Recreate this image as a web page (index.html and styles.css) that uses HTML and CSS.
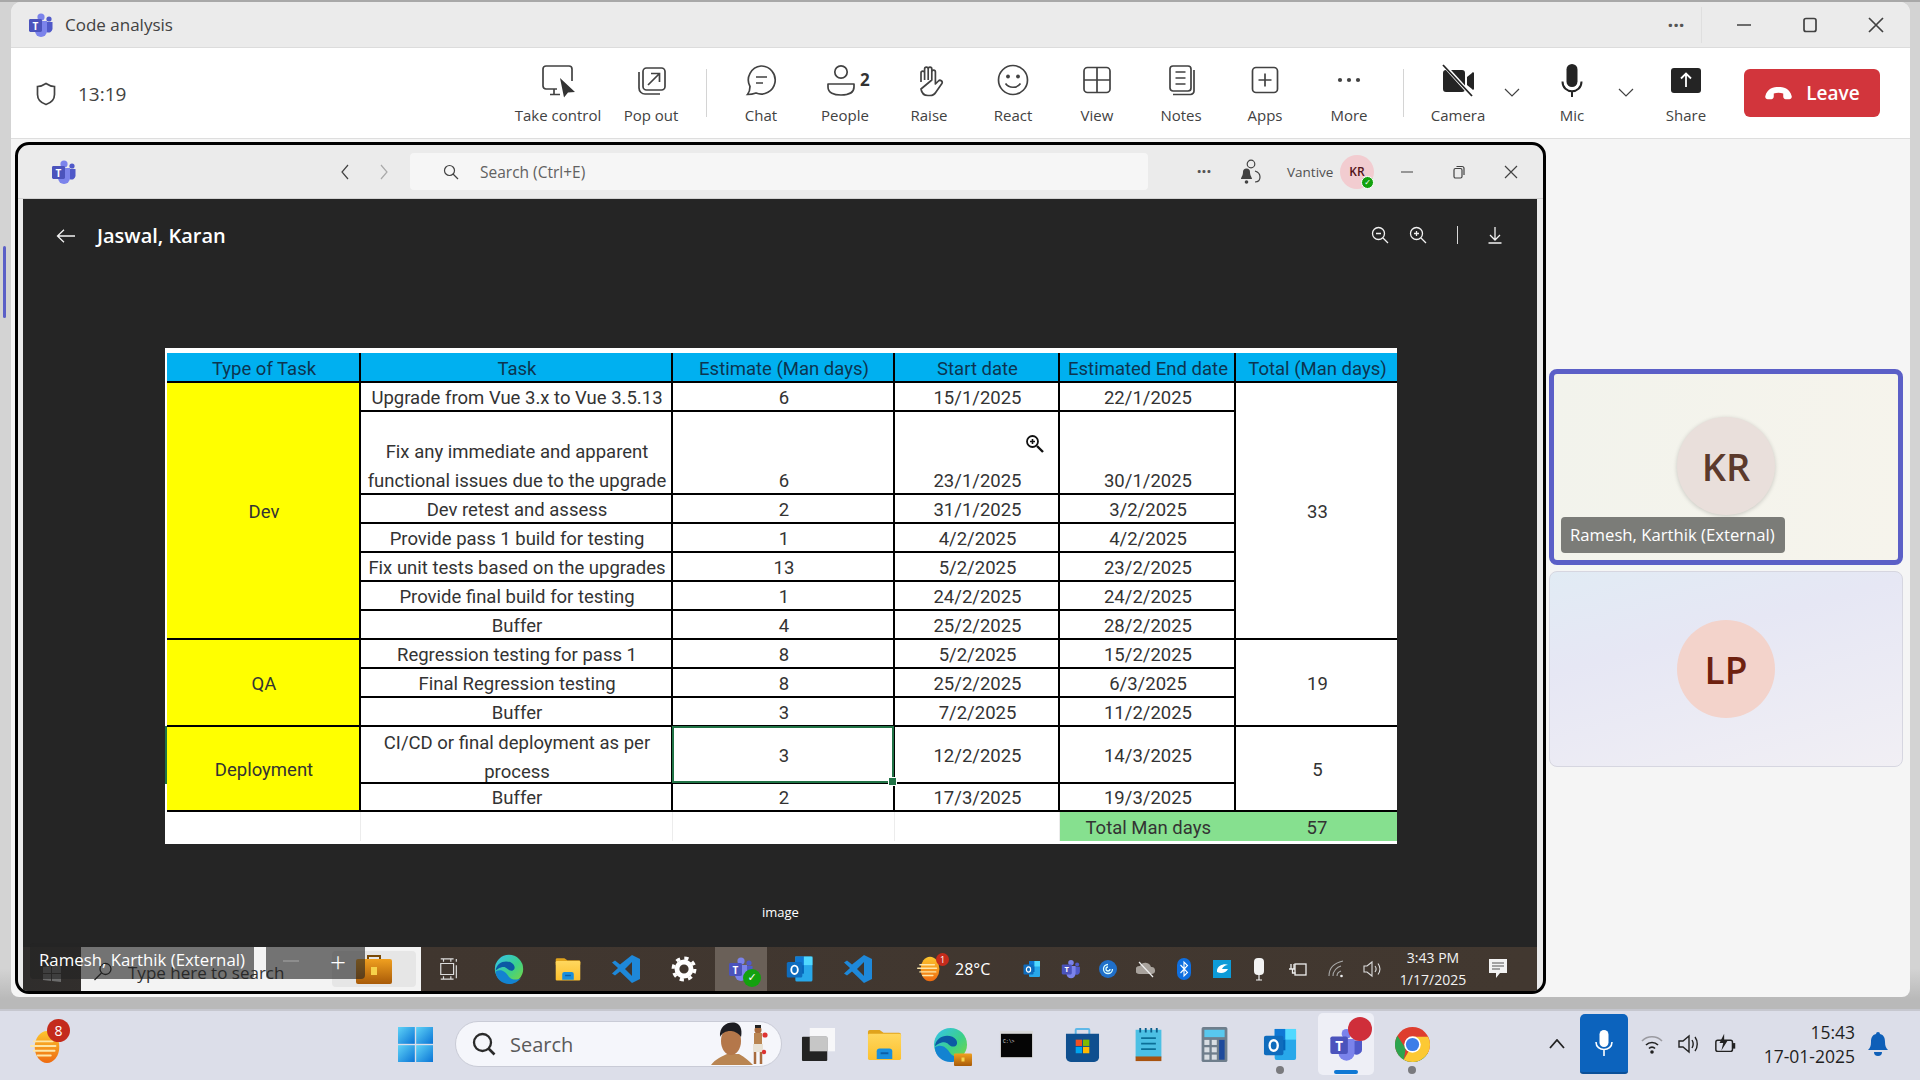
FILE: index.html
```html
<!DOCTYPE html>
<html lang="en">
<head>
<meta charset="utf-8">
<title>Code analysis</title>
<link rel="stylesheet" href="styles.css">
</head>
<body>
<svg class="defs" width="0" height="0" aria-hidden="true">
  <defs>
    <linearGradient id="winG" x1="0" y1="0" x2="1" y2="1"><stop offset="0" stop-color="#5fd3f7"/><stop offset="1" stop-color="#0a74d6"/></linearGradient>
    <linearGradient id="edgeG" x1="0" y1="0" x2="1" y2="1"><stop offset="0" stop-color="#35c1f1"/><stop offset=".55" stop-color="#3bd08a"/><stop offset="1" stop-color="#7fd63a"/></linearGradient>
    <linearGradient id="sunG" x1="0" y1="0" x2="0" y2="1"><stop offset="0" stop-color="#fdc62e"/><stop offset="1" stop-color="#ee6a10"/></linearGradient>
    <linearGradient id="folderG" x1="0" y1="0" x2="0" y2="1"><stop offset="0" stop-color="#ffd75e"/><stop offset="1" stop-color="#fcc02e"/></linearGradient>
    <linearGradient id="caseG" x1="0" y1="0" x2="0" y2="1"><stop offset="0" stop-color="#f0a020"/><stop offset="1" stop-color="#a85a08"/></linearGradient>
    <symbol id="teams" viewBox="0 0 26 24">
      <circle cx="13" cy="4" r="3.6" fill="#7b83eb"/>
      <circle cx="21" cy="6" r="2.6" fill="#5059c9"/>
      <path d="M17 9h7.5v7a4 4 0 0 1-6 3z" fill="#5059c9"/>
      <path d="M7 8h12v10a6 6 0 0 1-12 0z" fill="#7b83eb"/>
      <rect x="1" y="6" width="13" height="13" rx="1.4" fill="#4b53bc"/>
      <text x="7.5" y="16.5" class="logoT">T</text>
    </symbol>
    <symbol id="outlook" viewBox="0 0 36 36">
      <path d="M12 2h20a2 2 0 0 1 2 2v28a2 2 0 0 1-2 2H14a2 2 0 0 1-2-2z" fill="#28a8ea"/>
      <path d="M12 2h11v11H12z" fill="#0f78d4"/><path d="M23 2h11v11H23z" fill="#50d9ff"/><path d="M12 13h11v11H12z" fill="#0364b8"/>
      <rect x="1" y="9" width="20" height="20" rx="2" fill="#0f6cbd"/>
      <ellipse cx="11" cy="19" rx="4.2" ry="5.4" fill="none" stroke="#fff" stroke-width="2.4"/>
    </symbol>
    <symbol id="vscode" viewBox="0 0 30 30">
      <path d="M21 1l8 4v20l-8 4-12-11.500-5 4-3-2 6-5.500-6-5.500 3-2 5 4z" fill="#1e88d9"/>
      <path d="M21 8l-7 7 7 7z" fill="#3f3630"/>
    </symbol>
    <symbol id="edge" viewBox="0 0 36 36">
      <circle cx="18" cy="18" r="17" fill="url(#edgeG)"/>
      <path d="M2 20C3 10 13 7 20 10c6 3 6 9 2 10-6 1-6-6-13-4-4 1-7 4-7 4z" fill="#0c59a4"/>
      <path d="M2 21c0 9 8 15 16 15 6 0 11-3 14-7-5 3-12 2-15-3-3-5-9-9-15-5z" fill="#1383d1"/>
    </symbol>
    <symbol id="folder" viewBox="0 0 36 36">
      <path d="M1 5a2 2 0 0 1 2-2h10l4 3h16a2 2 0 0 1 2 2v4H1z" fill="#e0a31c"/>
      <rect x="1" y="7" width="34" height="27" rx="1.500" fill="url(#folderG)"/>
      <path d="M10 33V25a3 3 0 0 1 3-3h10a3 3 0 0 1 3 3v8z" fill="#1a8fdc"/><rect x="14" y="26" width="8" height="2" fill="#0b5ea6"/>
    </symbol>
    <symbol id="sun" viewBox="0 0 36 36">
      <ellipse cx="18" cy="18" rx="13" ry="17" fill="url(#sunG)"/>
      <path d="M4 12h20M1 17h26M4 22h22M8 27h14" stroke="#fde6a8" stroke-width="2" stroke-linecap="round"/>
    </symbol>
  </defs>
</svg>

<div class="screen">
  <div class="desk">
    <span class="side-pin"></span>
    <div class="window">
      <header class="titlebar">
        <svg class="t-logo"><use href="#teams"/></svg>
        <span class="t-name">Code analysis</span>
        <span class="t-spacer"></span>
        <span class="t-dots">···</span>
        <span class="t-sep"></span>
        <svg class="t-ctl" viewBox="0 0 16 16"><path d="M1 8h14" class="ln"/></svg>
        <svg class="t-ctl" viewBox="0 0 16 16"><rect x="2" y="1.500" width="12" height="13" rx="2" class="ln"/></svg>
        <svg class="t-ctl" viewBox="0 0 16 16"><path d="M1 1l14 14M15 1L1 15" class="ln"/></svg>
      </header>

      <nav class="toolbar">
        <div class="tb-left">
          <svg class="shield" viewBox="0 0 20 24"><path d="M10 1.500c3 2 5.500 3 8.500 3v8c0 5-4 8.500-8.500 10-4.500-1.500-8.500-5-8.500-10v-8c3 0 5.500-1 8.500-3z" class="ln"/></svg>
          <span class="clock">13:19</span>
        </div>
        <div class="tool w102">
          <svg class="ic" viewBox="0 0 36 36"><path d="M17 27H6a3 3 0 0 1-3-3V7a3 3 0 0 1 3-3h23a3 3 0 0 1 3 3v12" class="ln"/><path d="M14 27v5M10 32.500h10" class="ln"/><path d="M20 16l15 14-7 .5-4 5z" fill="#333"/></svg>
          <span>Take control</span>
        </div>
        <div class="tool">
          <svg class="ic" viewBox="0 0 36 36"><rect x="10" y="6" width="22" height="22" rx="3.500" class="ln"/><path d="M6 10v16a6 6 0 0 0 6 6h15" class="ln"/><path d="M15 23L26 12M18 11.500h8.500V20" class="ln"/></svg>
          <span>Pop out</span>
        </div>
        <span class="tb-div"></span>
        <div class="tool">
          <svg class="ic" viewBox="0 0 36 36"><path d="M18 4a14 14 0 1 1-5 27q-4 1.500-8.500 1.500q2.500-3 2.500-8A14 14 0 0 1 18 4z" class="ln"/><path d="M13 15h11M13 21h7" class="ln"/></svg>
          <span>Chat</span>
        </div>
        <div class="tool">
          <div class="people">
            <svg class="ic ic-p" viewBox="0 0 30 36"><circle cx="15" cy="10" r="6.200" class="ln"/><path d="M2 22h26v3c0 6-6 8-13 8S2 31 2 25z" class="ln" stroke-linejoin="round"/></svg>
            <b>2</b>
          </div>
          <span>People</span>
        </div>
        <div class="tool">
          <svg class="ic" viewBox="0 0 36 36"><path d="M10 20V11a1.800 1.800 0 0 1 3.600 0v7M13.600 18V7a1.800 1.800 0 0 1 3.600 0v11M17.200 18V7a1.800 1.800 0 0 1 3.600 0v11M20.800 18V10a1.800 1.800 0 0 1 3.600 0v12l3-3a2.200 2.200 0 0 1 3.500 2.600L25 30q-2 3.500-6 3.500h-2q-6 0-7-6.500z" class="ln" stroke-linejoin="round"/></svg>
          <span>Raise</span>
        </div>
        <div class="tool">
          <svg class="ic" viewBox="0 0 36 36"><circle cx="18" cy="18" r="14.500" class="ln"/><circle cx="13" cy="14.500" r="1.900" fill="#424242"/><circle cx="23" cy="14.500" r="1.900" fill="#424242"/><path d="M10.500 21.500c3.500 5 11.500 5 15 0" class="ln"/></svg>
          <span>React</span>
        </div>
        <div class="tool">
          <svg class="ic" viewBox="0 0 36 36"><rect x="5" y="5.500" width="26" height="25" rx="3.500" class="ln"/><path d="M18 5.500v25M5 18h26" class="ln"/></svg>
          <span>View</span>
        </div>
        <div class="tool">
          <svg class="ic" viewBox="0 0 36 36"><rect x="7" y="4" width="21" height="25" rx="3" class="ln"/><path d="M12.500 10h10M12.500 16h10M12.500 22h10" class="ln"/><path d="M31 8v21a3.500 3.500 0 0 1-3.500 3.500H10" class="ln"/></svg>
          <span>Notes</span>
        </div>
        <div class="tool">
          <svg class="ic" viewBox="0 0 36 36"><rect x="5.500" y="5.500" width="25" height="25" rx="3.500" class="ln"/><path d="M18 11.500v13M11.500 18h13" class="ln"/></svg>
          <span>Apps</span>
        </div>
        <div class="tool">
          <svg class="ic" viewBox="0 0 36 36"><circle cx="9" cy="18" r="2.100" fill="#424242"/><circle cx="18" cy="18" r="2.100" fill="#424242"/><circle cx="27" cy="18" r="2.100" fill="#424242"/></svg>
          <span>More</span>
        </div>
        <span class="tb-div tb-div2"></span>
        <div class="tool">
          <svg class="ic" viewBox="0 0 36 36"><path d="M6 8h16a3 3 0 0 1 3 3v16a3 3 0 0 1-3 3H6a3 3 0 0 1-3-3V11a3 3 0 0 1 3-3zM27 15l5-4a1 1 0 0 1 2 .500v15a1 1 0 0 1-2 .500l-5-4z" fill="#242424"/><path d="M3 2l29 32" stroke="#fff" stroke-width="4"/><path d="M3 3l29 31" stroke="#242424" stroke-width="1.800"/></svg>
          <span>Camera</span>
        </div>
        <svg class="chev" viewBox="0 0 16 10"><path d="M1 1l7 7 7-7" class="ln thin"/></svg>
        <div class="tool mic-tool">
          <svg class="ic" viewBox="0 0 36 36"><rect x="12.500" y="2" width="11" height="23" rx="5.500" fill="#242424"/><path d="M8.500 19.500c0 13 19 13 19 0M18 29v6" class="ln dark"/></svg>
          <span>Mic</span>
        </div>
        <svg class="chev" viewBox="0 0 16 10"><path d="M1 1l7 7 7-7" class="ln thin"/></svg>
        <div class="tool mic-tool">
          <svg class="ic" viewBox="0 0 36 36"><rect x="3" y="6" width="30" height="25" rx="3" fill="#242424"/><path d="M18 25V12M13 16.500l5-5 5 5" fill="none" stroke="#fff" stroke-width="1.800"/></svg>
          <span>Share</span>
        </div>
        <button class="leave">
          <svg viewBox="0 0 30 18"><path d="M1 12C3 3 10 2 15 2s12 1 14 10c.3 2-1 3-2.500 3h-4c-1.500 0-2.500-1-2.500-3V9c-3-1.200-7-1.200-10 0v3c0 2-1 3-2.500 3h-4C2 15 .7 14 1 12z" fill="#fff"/></svg>
          <span>Leave</span>
        </button>
      </nav>

      <main class="stage">
        <section class="shared">
          <div class="s-title">
            <svg class="s-logo"><use href="#teams"/></svg>
            <svg class="s-nav s-back" viewBox="0 0 10 16"><path d="M8 1L2 8l6 7" class="ln thin"/></svg>
            <svg class="s-nav s-fwd" viewBox="0 0 10 16"><path d="M2 1l6 7-6 7" class="ln thin pale"/></svg>
            <div class="s-search">
              <svg viewBox="0 0 16 16"><circle cx="6.500" cy="6.500" r="5" class="ln thin"/><path d="M10 10l5 5" class="ln thin"/></svg>
              <span>Search (Ctrl+E)</span>
            </div>
            <span class="s-dots">···</span>
            <svg class="s-bell" viewBox="0 0 22 26"><circle cx="12" cy="5" r="3.800" class="ln thin"/><path d="M16 12c3 1 5 3 5 6s-2 5-5 5" class="ln thin"/><path d="M4 13a3.500 3.500 0 0 1 7 0c0 4 2 5 2 7H2c0-2 2-3 2-7z" fill="#424242"/><circle cx="7.500" cy="23" r="1.800" fill="#424242"/></svg>
            <span class="s-org">Vantive</span>
            <span class="s-avatar">KR<i class="s-status">✓</i></span>
            <svg class="s-ctl s-ctl1" viewBox="0 0 14 14"><path d="M1 7h12" class="ln thin"/></svg>
            <svg class="s-ctl" viewBox="0 0 14 14"><rect x="2" y="3.500" width="8" height="9.500" rx="1.500" class="ln thin"/><path d="M4.500 1.500H10a2 2 0 0 1 2 2V10" class="ln thin"/></svg>
            <svg class="s-ctl" viewBox="0 0 14 14"><path d="M1 1l12 12M13 1L1 13" class="ln thin"/></svg>
          </div>

          <div class="viewer">
            <div class="v-head">
              <svg class="v-back" viewBox="0 0 20 14"><path d="M19 7H1.500M8 .8L1.500 7 8 13.200" class="lw"/></svg>
              <span class="v-name">Jaswal, Karan</span>
              <span class="t-spacer"></span>
              <svg class="v-ic" viewBox="0 0 18 18"><circle cx="7.500" cy="7.500" r="6" class="lw"/><path d="M12 12l5 5M5 7.500h5" class="lw"/></svg>
              <svg class="v-ic" viewBox="0 0 18 18"><circle cx="7.500" cy="7.500" r="6" class="lw"/><path d="M12 12l5 5M5 7.500h5M7.500 5v5" class="lw"/></svg>
              <span class="v-sep"></span>
              <svg class="v-ic" viewBox="0 0 18 18"><path d="M9 1v12.500M4 9l5 5 5-5M2.500 17h13" class="lw"/></svg>
            </div>

            <div class="sheet">
              <table class="grid">
                <colgroup><col class="c1"><col class="c2"><col class="c3"><col class="c4"><col class="c5"><col class="c6"></colgroup>
                <tr class="head"><th>Type of Task</th><th>Task</th><th>Estimate (Man days)</th><th>Start date</th><th>Estimated End date</th><th>Total (Man days)</th></tr>
                <tr><td rowspan="7" class="type">Dev</td><td>Upgrade from Vue 3.x to Vue 3.5.13</td><td>6</td><td>15/1/2025</td><td>22/1/2025</td><td rowspan="7" class="sum">33</td></tr>
                <tr class="tall"><td><div class="two">Fix any immediate and apparent<br>functional issues due to the upgrade</div></td><td>6</td><td class="cursor-cell">23/1/2025<svg class="zoom-cursor" viewBox="0 0 20 20"><circle cx="7.500" cy="7.500" r="5.500" fill="#fff" stroke="#111" stroke-width="1.800"/><path d="M5 7.500h5M7.500 5v5" stroke="#111" stroke-width="1.600"/><path d="M12 12l6 6" stroke="#111" stroke-width="2.400"/></svg></td><td>30/1/2025</td></tr>
                <tr><td>Dev retest and assess</td><td>2</td><td>31/1/2025</td><td>3/2/2025</td></tr>
                <tr><td>Provide pass 1 build for testing</td><td>1</td><td>4/2/2025</td><td>4/2/2025</td></tr>
                <tr><td>Fix unit tests based on the upgrades</td><td>13</td><td>5/2/2025</td><td>23/2/2025</td></tr>
                <tr><td>Provide final build for testing</td><td>1</td><td>24/2/2025</td><td>24/2/2025</td></tr>
                <tr><td>Buffer</td><td>4</td><td>25/2/2025</td><td>28/2/2025</td></tr>
                <tr><td rowspan="3" class="type">QA</td><td>Regression testing for pass 1</td><td>8</td><td>5/2/2025</td><td>15/2/2025</td><td rowspan="3" class="sum">19</td></tr>
                <tr><td>Final Regression testing</td><td>8</td><td>25/2/2025</td><td>6/3/2025</td></tr>
                <tr><td>Buffer</td><td>3</td><td>7/2/2025</td><td>11/2/2025</td></tr>
                <tr class="wrap"><td rowspan="2" class="type deploy">Deployment</td><td><div class="two">CI/CD or final deployment as per<br>process</div></td><td class="selected">3</td><td class="mid">12/2/2025</td><td class="mid">14/3/2025</td><td rowspan="2" class="sum">5</td></tr>
                <tr class="short"><td>Buffer</td><td>2</td><td>17/3/2025</td><td>19/3/2025</td></tr>
                <tr class="foot"><td></td><td></td><td></td><td></td><td class="total">Total Man days</td><td class="total">57</td></tr>
              </table>
            </div>

            <div class="v-caption">image</div>

            <div class="mini-bar">
              <div class="mini-start"><svg viewBox="0 0 20 20"><path d="M1 3l8-1v7H1zM10 2l9-1v8h-9zM1 10h8v7l-8-1zM10 10h9v8l-9-1z" fill="#6b6b6b"/></svg></div>
              <div class="mini-search">
                <svg viewBox="0 0 20 20"><circle cx="12.500" cy="7" r="5.500" fill="none" stroke="#222" stroke-width="1.300"/><path d="M8.500 11l-7 7" stroke="#222" stroke-width="1.300"/></svg>
                <span>Type here to search</span>
                <div class="mini-case"><svg viewBox="0 0 36 30"><path d="M12 5V2h12v3" fill="none" stroke="#7a4a08" stroke-width="2"/><rect y="5" width="36" height="25" rx="2" fill="url(#caseG)"/><rect x="15" y="13" width="6" height="8" fill="#f6d24a"/></svg></div>
              </div>
              <div class="mc"><svg class="m20" viewBox="0 0 20 24"><path d="M1 1h14M1 23h14M4 1v3M12 1v3M4 20v3M12 20v3M1 6h14v12H1zM18 1v3M18 8v14" fill="none" stroke="#ddd" stroke-width="1.300"/></svg></div>
              <div class="mc"><svg class="m30"><use href="#edge"/></svg></div>
              <div class="mc"><svg class="m26"><use href="#folder"/></svg></div>
              <div class="mc"><svg class="m30"><use href="#vscode"/></svg></div>
              <div class="mc"><svg class="m26" viewBox="0 0 24 24"><circle cx="12" cy="12" r="6.500" fill="none" stroke="#fff" stroke-width="4.500"/><circle cx="12" cy="12" r="10" fill="none" stroke="#fff" stroke-width="3" stroke-dasharray="3.900 3.950"/></svg></div>
              <div class="mc mc-on"><svg class="m26"><use href="#teams"/></svg><i class="mc-check">✓</i></div>
              <div class="mc"><svg class="m28"><use href="#outlook"/></svg></div>
              <div class="mc"><svg class="m30"><use href="#vscode"/></svg></div>
              <div class="mc mc-sunny"><span class="sunwrap"><svg class="m26"><use href="#sun"/></svg><i class="sunbadge">1</i></span></div>
              <div class="mc mc-temp">28°C</div>
              <div class="mc"><svg class="m18"><use href="#outlook"/></svg></div>
              <div class="mc"><svg class="m20"><use href="#teams"/></svg></div>
              <div class="mc"><svg class="m18" viewBox="0 0 18 18"><circle cx="9" cy="9" r="9" fill="#1f6fc9"/><path d="M13.500 9A4.500 4.500 0 1 1 9 4.500M11 9a2 2 0 1 1-2-2" fill="none" stroke="#dff" stroke-width="1.300"/></svg></div>
              <div class="mc"><svg class="m20" viewBox="0 0 20 18"><path d="M3 14a4 4 0 0 1 1-8 6 6 0 0 1 11 1 3.500 3.500 0 0 1 1 7z" fill="#a8a29c"/><path d="M3 2l14 15" stroke="#eee" stroke-width="1.200"/></svg></div>
              <div class="mc"><svg class="m-bt" viewBox="0 0 14 22"><rect width="14" height="22" rx="7" fill="#0f6fe0"/><path d="M3.500 7l7 7.500L7 18V4l3.500 3.500-7 7.500" fill="none" stroke="#fff" stroke-width="1.100"/></svg></div>
              <div class="mc"><svg class="m18" viewBox="0 0 18 18"><rect width="18" height="18" fill="#0d9bd8"/><path d="M4 10c1-5 8-7 11-5-3 0-5 2-6 4h6c-2 4-7 5-11 3z" fill="#fff"/></svg></div>
              <div class="mc"><svg class="m-mic" viewBox="0 0 12 24"><rect x="1" y="1" width="10" height="17" rx="4" fill="#f3f3f3"/><path d="M6 18v5M3 23h6" stroke="#f3f3f3" stroke-width="1.200"/></svg></div>
              <div class="mc"><svg class="m20" viewBox="0 0 20 18"><rect x="8" y="4" width="11" height="11" fill="none" stroke="#eee" stroke-width="1.300"/><path d="M2 9h6M4 4v5M7 4v5M5.500 9v4h3" fill="none" stroke="#eee" stroke-width="1.300"/></svg></div>
              <div class="mc"><svg class="m20" viewBox="0 0 20 20"><path d="M2 17c0-8 5-13 14-15M6 17c0-5 4-9 8-10M10 17c0-3 1-4 4-5" fill="none" stroke="#aaa" stroke-width="1.100"/><circle cx="14.500" cy="17" r="1.300" fill="#eee"/></svg></div>
              <div class="mc"><svg class="m20" viewBox="0 0 20 20"><path d="M1 7v6h3l5 4V3L4 7z" fill="none" stroke="#ddd" stroke-width="1.100"/><path d="M12 7c1.500 2 1.500 4 0 6M15 4.500c2.500 3.500 2.500 7.500 0 11" fill="none" stroke="#ddd" stroke-width="1.100"/></svg></div>
              <div class="mc mc-time"><span>3:43 PM</span><span>1/17/2025</span></div>
              <div class="mc"><svg class="m22" viewBox="0 0 20 22"><path d="M1 1h18v14h-7l-4 5v-5H1z" fill="#f3f3f3"/><path d="M4 5h12M4 8h12M4 11h8" stroke="#555" stroke-width="1.200"/></svg></div>
              <div class="mc"></div>
            </div>

            <div class="mini-tip">Ramesh, Karthik (External)</div>
            <div class="mini-ctrl"><span class="minus"></span><span class="plus">+</span></div>
          </div>
        </section>

        <aside class="rail">
          <div class="tile tile-a">
            <span class="avatar av-kr">KR</span>
            <span class="tile-name">Ramesh, Karthik (External)</span>
          </div>
          <div class="tile tile-b">
            <span class="avatar av-lp">LP</span>
          </div>
        </aside>
      </main>
    </div>
  </div>

  <footer class="taskbar">
    <div class="tk-weather"><svg class="w-sun"><use href="#sun"/></svg><i class="w-badge">8</i></div>
    <div class="tk-start">
      <svg viewBox="0 0 36 36"><rect width="17.300" height="17.300" fill="url(#winG)"/><rect x="18.700" width="17.300" height="17.300" fill="url(#winG)"/><rect y="18.700" width="17.300" height="17.300" fill="url(#winG)"/><rect x="18.700" y="18.700" width="17.300" height="17.300" fill="url(#winG)"/></svg>
    </div>
    <div class="tk-search">
      <svg class="tk-lens" viewBox="0 0 24 24"><circle cx="10.500" cy="10.500" r="8.500" fill="none" stroke="#2a2a2a" stroke-width="2.300"/><path d="M16.500 16.500l6 6" stroke="#2a2a2a" stroke-width="2.600"/></svg>
      <span>Search</span>
      <svg class="tk-doodle" viewBox="0 0 60 44"><path d="M0 44c4-6 12-9 16-11l12 0c6 3 10 7 14 11z" fill="#b98552"/><ellipse cx="20" cy="20" rx="10" ry="14" fill="#b4774a"/><path d="M9 16C8 4 18 0 25 2c6 2 6 10 5 14-3-5-8-6-11-6-4 0-8 2-10 6z" fill="#1d1d22"/><circle cx="47" cy="9" r="3.500" fill="#a86b3e"/><path d="M44 4h6v3h-6z" fill="#222"/><rect x="43" y="12" width="8" height="12" fill="#b98552"/><rect x="42" y="23" width="10" height="8" fill="#e8e2d6"/><path d="M44 31v12M50 31v12" stroke="#a86b3e" stroke-width="2.500"/><circle cx="54" cy="14" r="2.600" fill="#d33"/><circle cx="53" cy="31" r="2.200" fill="#d33"/></svg>
    </div>
    <div class="tk-cell"><svg class="tk-ic" viewBox="0 0 36 36"><rect x="9" y="1" width="26" height="24" fill="#f7f7f9"/><rect x="1" y="10" width="26" height="25" rx="1" fill="#232323"/><rect x="9" y="10" width="18" height="15" fill="#c6c6c6"/></svg></div>
    <div class="tk-cell"><svg class="tk-ic"><use href="#folder"/></svg></div>
    <div class="tk-cell">
      <span class="edgewrap"><svg class="tk-ic"><use href="#edge"/></svg><svg class="edgecase" viewBox="0 0 36 30"><rect y="5" width="36" height="25" rx="2" fill="url(#caseG)"/><rect x="15" y="13" width="6" height="8" fill="#f6d24a"/></svg></span>
    </div>
    <div class="tk-cell"><svg class="tk-ic" viewBox="0 0 36 30"><rect x="1" y="1" width="34" height="28" fill="#d8d8d8"/><rect x="2" y="4" width="32" height="24" fill="#050505"/><text x="4" y="13" class="cmdT">C:\></text></svg></div>
    <div class="tk-cell"><svg class="tk-ic" viewBox="0 0 36 36"><path d="M11 8V3a1 1 0 0 1 1-1h12a1 1 0 0 1 1 1v5" fill="none" stroke="#5fb8e8" stroke-width="2"/><path d="M1 7h34v24a5 5 0 0 1-5 5H6a5 5 0 0 1-5-5z" fill="#0f4f8f"/><rect x="11" y="13" width="6.500" height="6.500" fill="#f25022"/><rect x="18.500" y="13" width="6.500" height="6.500" fill="#7fba00"/><rect x="11" y="20.500" width="6.500" height="6.500" fill="#00a4ef"/><rect x="18.500" y="20.500" width="6.500" height="6.500" fill="#ffb900"/></svg></div>
    <div class="tk-cell"><svg class="tk-ic" viewBox="0 0 30 38"><rect x="1" y="3" width="28" height="30" fill="#4cc0e4"/><rect x="1" y="32" width="28" height="5" fill="#a8530f"/><path d="M6 1v5M12 1v5M18 1v5M24 1v5" stroke="#0b5c8a" stroke-width="2"/><path d="M7 12h16M7 18h16M7 24h16" stroke="#0b6f97" stroke-width="2"/></svg></div>
    <div class="tk-cell"><svg class="tk-ic" viewBox="0 0 28 38"><rect width="28" height="38" rx="2" fill="#6f7e8c"/><rect x="3" y="3" width="22" height="8" fill="#58c8ee"/><g fill="#d9dee3"><rect x="3" y="14" width="5.500" height="5.500"/><rect x="11" y="14" width="5.500" height="5.500"/><rect x="3" y="22" width="5.500" height="5.500"/><rect x="11" y="22" width="5.500" height="5.500"/><rect x="3" y="30" width="5.500" height="5.500"/><rect x="11" y="30" width="5.500" height="5.500"/></g><rect x="19" y="14" width="6" height="21.500" fill="#1e4a9c"/></svg></div>
    <div class="tk-cell dot"><svg class="tk-ic"><use href="#outlook"/></svg></div>
    <div class="tk-cell tk-active">
      <svg class="tk-ic"><use href="#teams"/></svg>
      <i class="red-dot"></i><i class="run-bar"></i>
    </div>
    <div class="tk-cell dot"><svg class="tk-ic" viewBox="0 0 36 36"><circle cx="18" cy="18" r="18" fill="#de3d2e"/><path d="M18 18L33.600 27A18 18 0 0 1 9 33.600z" fill="#2da44e"/><path d="M18 18L9 33.600A18 18 0 0 0 18 36 18 18 0 0 0 36 18a18 18 0 0 0-2-8H18z" fill="#fcc934"/><path d="M9 33.600A18 18 0 0 1 2.400 9L11 22z" fill="#2da44e"/><circle cx="18" cy="18" r="8.500" fill="#fff"/><circle cx="18" cy="18" r="6.800" fill="#3b7de8"/></svg></div>
    <span class="t-spacer"></span>
    <svg class="tk-up" viewBox="0 0 16 10"><path d="M1 9l7-8 7 8" fill="none" stroke="#222" stroke-width="1.800"/></svg>
    <div class="tk-mic"><svg viewBox="0 0 20 28"><rect x="5.500" y="1" width="9" height="17" rx="4.500" fill="#fff"/><path d="M2 13c0 10 16 10 16 0M10 21v6" fill="none" stroke="#fff" stroke-width="1.600"/></svg></div>
    <svg class="tk-tray" viewBox="0 0 24 24"><path d="M2 9a14 14 0 0 1 20 0" fill="none" stroke="#9a9aa0" stroke-width="1.600"/><path d="M6 13a8.500 8.500 0 0 1 12 0M9 16.500a4 4 0 0 1 6 0" fill="none" stroke="#222" stroke-width="1.700"/><circle cx="12" cy="20" r="1.800" fill="#222"/></svg>
    <svg class="tk-tray" viewBox="0 0 24 24"><path d="M2 9v6h4l6 5V4L6 9z" fill="none" stroke="#222" stroke-width="1.400"/><path d="M15 8c1.500 2.500 1.500 5.500 0 8M18 5c3 4 3 10 0 14" fill="none" stroke="#222" stroke-width="1.400"/></svg>
    <svg class="tk-tray" viewBox="0 0 26 24"><rect x="2" y="8" width="18" height="12" rx="2" fill="none" stroke="#222" stroke-width="1.600"/><rect x="20.500" y="11" width="2.500" height="6" fill="#222"/><path d="M11 1l-5 10h4l-2 8 7-11h-4z" fill="#222"/></svg>
    <div class="tk-clock"><span>15:43</span><span>17-01-2025</span></div>
    <svg class="tk-bell" viewBox="0 0 20 26"><path d="M10 1a2 2 0 0 1 2 2c4 1 5 4 5 8 0 4 1 6 3 8H0c2-2 3-4 3-8 0-4 1-7 5-8a2 2 0 0 1 2-2z" fill="#0e5fb8"/><path d="M6 21h8a4 4 0 0 1-8 0z" fill="#0e5fb8"/></svg>
  </footer>
</div>
</body>
</html>
```

FILE: styles.css
```css
* { box-sizing: border-box; }
html, body { margin: 0; height: 100%; }
body { font-family: "Open Sans", "Noto Sans", sans-serif; color: #424242; background: #d3d3d3; overflow: hidden; }
.defs { display: block; height: 0; }
.logoT { font: 700 10px "Open Sans", sans-serif; fill: #fff; text-anchor: middle; }
.cmdT { font: 5px "Liberation Mono", monospace; fill: #ddd; }
.ln { fill: none; stroke: #424242; stroke-width: 1.700; }
.ln.thin { stroke-width: 1.200; }
.ln.pale { stroke: #a9a9a9; }
.ln.dark { stroke: #242424; stroke-width: 2; }
.lw { fill: none; stroke: #f2f2f2; stroke-width: 1.300; }
.t-spacer { flex: 1; }

.screen { width: 1920px; height: 1080px; display: flex; flex-direction: column; }
.desk { position: relative; height: 1009px; padding: 0 10px 12px 11px; border-top: 2px solid #a8a8a8; background: linear-gradient(#d3d3d3 96%, #b9b9b9 99%); }
.side-pin { position: absolute; left: 3px; top: 244px; width: 3px; height: 72px; background: #5b5fc7; border-radius: 2px; }
.window { height: 995px; display: flex; flex-direction: column; background: #f5f5f5; border-radius: 10px 10px 8px 8px; overflow: hidden; }

.titlebar { height: 46px; flex: none; display: flex; align-items: center; background: #ebebeb; border-bottom: 1px solid #dcdcdc; padding-left: 17px; }
.t-logo { width: 26px; height: 24px; margin-right: 11px; }
.t-name { font-size: 17px; color: #424242; }
.t-dots { width: 24px; text-align: center; font-size: 20px; font-weight: 700; color: #555; line-height: 1; margin-right: 13px; }
.t-sep { width: 1px; height: 36px; background: #dfdfdf; margin-right: 34px; }
.t-ctl { width: 16px; height: 16px; margin-right: 50px; }
.t-ctl:last-child { margin-right: 26px; }

.toolbar { height: 91px; flex: none; display: flex; align-items: flex-start; background: #fff; border-bottom: 1px solid #dedede; padding-top: 14px; }
.tb-left { width: 496px; height: 64px; display: flex; align-items: center; padding-left: 25px; }
.shield { width: 20px; height: 24px; margin-right: 22px; }
.clock { font-size: 19px; color: #424242; }
.tool { width: 84px; flex: none; display: flex; flex-direction: column; align-items: center; font-size: 15px; line-height: 20px; color: #424242; }
.tool.w102 { width: 102px; }
.tool span { margin-top: 7px; white-space: nowrap; }
.ic { width: 36px; height: 36px; display: block; }
.people { display: flex; align-items: center; height: 36px; }
.ic-p { width: 30px; margin-left: 8px; }
.people b { font-size: 17px; color: #333; margin: 0 0 0 4px; width: 12px; }
.tb-div { width: 1px; height: 48px; margin: 7px 12px 0 13px; background: #d4d4d4; flex: none; }
.tb-div2 { margin-left: 12px; }
.chev { width: 16px; height: 10px; margin: 26px 4px 0 4px; flex: none; }
.mic-tool { margin-left: 6px; }
.mic-tool + .chev { margin-left: 4px; }
.leave { width: 136px; height: 48px; margin: 7px 0 0 16px; border: 0; border-radius: 6px; background: #d2353c; color: #fff; display: flex; align-items: center; justify-content: center; gap: 13px; font: 600 19px "Open Sans", sans-serif; flex: none; }
.leave svg { width: 29px; height: 17px; }

.stage { flex: 1; display: flex; padding: 3px 0 0 4px; min-height: 0; }
.shared { width: 1531px; height: 852px; flex: none; border: 3px solid #000; border-radius: 14px; background: #ebebeb; display: flex; flex-direction: column; overflow: hidden; }
.s-title { height: 54px; flex: none; display: flex; align-items: center; border-bottom: 1px solid #d2d2d2; padding-left: 33px; }
.s-logo { width: 26px; height: 24px; flex: none; }
.s-nav { width: 10px; height: 16px; flex: none; }
.s-back { margin-left: 263px; }
.s-fwd { margin-left: 29px; }
.s-search { width: 738px; height: 37px; margin-left: 21px; background: #f6f6f6; border-radius: 4px; display: flex; align-items: center; padding-left: 33px; font-size: 15.500px; color: #616161; flex: none; }
.s-search svg { width: 16px; height: 16px; margin-right: 21px; }
.s-dots { width: 24px; margin-left: 44px; text-align: center; font-weight: 700; font-size: 17px; color: #555; }
.s-bell { width: 22px; height: 26px; margin-left: 23px; }
.s-org { font-size: 13.500px; color: #505050; margin-left: 26px; width: 52px; }
.s-avatar { position: relative; width: 34px; height: 34px; margin-left: 1px; border-radius: 50%; background: #f2ccd0; color: #521218; font-size: 12px; font-weight: 600; display: flex; align-items: center; justify-content: center; }
.s-status { position: absolute; right: 0; bottom: 0; width: 13px; height: 13px; border-radius: 50%; background: #13a10e; border: 1px solid #fff; color: #fff; font: 700 8px/11px "DejaVu Sans", sans-serif; text-align: center; }
.s-ctl { width: 14px; height: 14px; margin-left: 38px; }
.s-ctl1 { margin-left: 26px; }

.viewer { position: relative; height: 792px; flex: none; margin: 0 6px 0 5px; background: #252525; display: flex; flex-direction: column; }
.v-head { height: 75px; flex: none; display: flex; align-items: center; padding: 0 33px 0 33px; }
.v-back { width: 20px; height: 14px; margin: 0 21px 2px 0; }
.v-name { font-size: 20px; font-weight: 600; color: #fff; margin-bottom: 2px; }
.v-ic { width: 18px; height: 18px; margin: 0 0 4px 20px; }
.v-sep { width: 1px; height: 18px; background: #d8d8d8; margin: 0 8px 4px 30px; }

.sheet { width: 1232px; height: 496px; margin: 74px 0 0 142px; padding: 5px 0 0 2px; background: #fff; flex: none; }
.grid { width: 1230px; table-layout: fixed; border-collapse: collapse; font: 18.500px/24px Roboto, "Liberation Sans", sans-serif; color: #333; text-align: center; }
.c1 { width: 193px; } .c2 { width: 312px; } .c3 { width: 222px; } .c4 { width: 165px; } .c5 { width: 176px; } .c6 { width: 162px; }
.grid th, .grid td { height: 29px; padding: 2px 0 0 2px; border: 2px solid #000; font-weight: 400; vertical-align: bottom; white-space: nowrap; }
.grid th { background: #00b0f0; color: #0c3550; vertical-align: bottom; }
.grid tr > :first-child { border-left: 0; }
.grid tr > :last-child { border-right: 0; }
.head th { border-top: 0; }
.grid .type { background: #ff0; vertical-align: middle; }
.grid .sum, .grid .mid { vertical-align: middle; }
.tall td { height: 83px; }
.two { line-height: 29px; margin-bottom: -3px; }
.wrap td { height: 57px; }
.wrap .two { margin-bottom: -5px; }
.wrap .selected { vertical-align: middle; }
.short td { height: 28px; }
.foot td { height: 30px; border: 1px solid #ececec; border-top: 2px solid #000; border-bottom: 0; }
.grid .total { background: #86e08f; border: 0; border-top: 2px solid #000; vertical-align: middle; }
.selected { position: relative; }
.selected::before { content: ""; position: absolute; left: -1px; right: -1px; top: -1px; bottom: -1px; border: 2px solid #217346; }
.selected::after { content: ""; position: absolute; right: -4px; bottom: -4px; width: 7px; height: 7px; background: #217346; border: 1px solid #fff; }
.deploy { position: relative; }
.deploy::before { content: ""; position: absolute; left: -2px; top: -1px; width: 2px; height: 58px; background: #217346; }
.cursor-cell { position: relative; }
.zoom-cursor { position: absolute; right: 13px; top: 22px; width: 20px; height: 20px; }

.v-caption { margin-top: 59px; padding-left: 739px; font-size: 13px; color: #fff; line-height: 18px; flex: none; }
.mini-bar { position: absolute; left: 0; right: 0; bottom: 0; height: 44px; display: grid; grid-template-columns: 58px 340px 56px 64px 54px 62px 54px 60px 58px 58px 68px 55px 44px 34px 40px 36px 40px 36px 38px 38px 42px 30px 90px 40px 19px; align-items: center; background: linear-gradient(90deg, #2f2d2c 0, #40362f 25%, #423830 100%); }
.mini-start { height: 44px; display: flex; align-items: center; justify-content: center; padding-top: 10px; }
.mini-start svg { width: 20px; height: 20px; }
.mini-search { height: 44px; background: #f3f3f3; display: flex; align-items: center; font-size: 17px; color: #333; padding-left: 12px; padding-top: 6px; }
.mini-search > svg { width: 20px; height: 20px; margin-right: 15px; flex: none; }
.mini-search span { width: 200px; white-space: nowrap; flex: none; }
.mini-case { width: 84px; height: 36px; margin-left: 4px; background: #e6e6e6; border-radius: 4px; display: flex; align-items: center; justify-content: center; flex: none; margin-top: -6px; }
.mini-case svg { width: 36px; height: 30px; }
.mc { display: flex; align-items: center; justify-content: center; height: 44px; position: relative; }
.mc-on { background: #6a6058; margin: 0 4px; }
.mc-check { position: absolute; right: 6px; bottom: 4px; width: 18px; height: 18px; border-radius: 50%; background: #13a10e; color: #fff; font: 700 11px/18px "DejaVu Sans", sans-serif; text-align: center; }
.mc-sunny { padding-left: 18px; }
.m18 { width: 18px; height: 20px; } .m20 { width: 20px; height: 22px; } .m22 { width: 20px; height: 24px; }
.m26 { width: 26px; height: 26px; } .m28 { width: 28px; height: 28px; } .m30 { width: 30px; height: 30px; }
.m-bt { width: 14px; height: 24px; } .m-mic { width: 12px; height: 26px; }
.sunwrap { position: relative; display: block; height: 26px; }
.sunbadge { position: absolute; right: -6px; top: -3px; width: 13px; height: 13px; border-radius: 50%; background: #c42b1c; color: #fff; font: 9px/13px "Open Sans", sans-serif; text-align: center; }
.mc-temp { font-size: 16px; color: #fff; justify-content: flex-start; }
.mc-time { flex-direction: column; font-size: 14px; color: #f3f3f3; line-height: 22px; }
.mini-tip { position: absolute; left: 7px; top: 744px; width: 224px; height: 36px; border-radius: 4px; background: rgba(35,35,35,.62); color: #fff; font-size: 16.800px; line-height: 34px; padding-left: 9px; white-space: nowrap; }
.mini-ctrl { position: absolute; left: 243px; top: 744px; width: 99px; height: 36px; border-radius: 4px; background: rgba(35,35,35,.62); display: flex; align-items: center; }
.minus { width: 16px; height: 2px; background: #8d8d8d; margin-left: 17px; }
.plus { color: #fff; font-size: 28px; line-height: 30px; margin-left: 31px; font-weight: 300; }

.rail { width: 354px; flex: none; margin-left: 3px; padding-top: 227px; display: flex; flex-direction: column; gap: 6px; }
.tile { height: 196px; border-radius: 8px; display: flex; align-items: center; justify-content: center; position: relative; }
.tile-a { border: 5px solid #5b5fc7; background: linear-gradient(100deg, #f2f3ec, #f6f4ec); }
.tile-b { border: 1px solid #d6d6e0; background: linear-gradient(165deg, #e1ebf4 0, #e6e7f4 35%, #f1eff4 100%); }
.avatar { width: 98px; height: 98px; border-radius: 50%; display: flex; align-items: center; justify-content: center; font-size: 38px; font-weight: 600; }
.av-kr { background: #e9dfdb; color: #5c3a2c; box-shadow: 0 1px 4px rgba(0,0,0,.18); margin-bottom: 3px; }
.av-lp { background: #f3d3cb; color: #6e2110; font-size: 37px; }
.tile-name { position: absolute; left: 7px; bottom: 7px; width: 224px; height: 36px; border-radius: 4px; background: #7b7c78; color: #fff; font-size: 16.700px; line-height: 36px; padding-left: 9px; white-space: nowrap; }

.taskbar { height: 71px; flex: none; display: flex; align-items: center; background: #dcdee9; border-top: 2px solid #c6c7cf; padding-bottom: 3px; }
.tk-weather { position: relative; width: 382px; height: 44px; padding-left: 30px; }
.w-sun { width: 34px; height: 34px; margin-top: 8px; display: block; }
.w-badge { position: absolute; left: 47px; top: -3px; width: 23px; height: 23px; border-radius: 50%; background: #c42b1c; color: #fff; font: 14px/23px "Open Sans", sans-serif; text-align: center; }
.tk-start { width: 66px; display: flex; justify-content: center; }
.tk-start svg { width: 35px; height: 35px; }
.tk-search { width: 327px; height: 46px; margin: 0 3px 0 7px; border-radius: 23px; background: #f5f6fb; border: 1px solid #c9cbd6; display: flex; align-items: center; padding-left: 16px; font-size: 20px; color: #5a5a5a; position: relative; }
.tk-lens { width: 24px; height: 24px; margin-right: 14px; }
.tk-doodle { position: absolute; right: 10px; bottom: 1px; width: 60px; height: 44px; }
.tk-cell { width: 66px; height: 62px; position: relative; display: flex; align-items: center; justify-content: center; flex: none; }
.tk-ic { width: 35px; height: 35px; display: block; }
.edgewrap { position: relative; display: block; height: 35px; }
.edgecase { position: absolute; right: -4px; bottom: -4px; width: 18px; height: 15px; }
.tk-active { background: #eeeff6; border-radius: 5px; width: 56px; margin: 0 5px; }
.red-dot { position: absolute; right: 2px; top: 4px; width: 24px; height: 24px; border-radius: 50%; background: #cf2e3a; }
.run-bar { position: absolute; left: 16px; bottom: 1px; width: 24px; height: 4px; border-radius: 2px; background: #0f78d4; }
.dot::after { content: ""; position: absolute; left: 50%; bottom: 1px; width: 8px; height: 8px; margin-left: -4px; border-radius: 50%; background: #7a7a7e; }
.tk-up { width: 16px; height: 10px; margin-right: 15px; }
.tk-mic { width: 48px; height: 60px; border-radius: 5px 5px 3px 3px; background: #0c63bd; border-bottom: 2px solid #0a4f98; display: flex; align-items: center; justify-content: center; margin-right: 12px; }
.tk-mic svg { width: 20px; height: 28px; }
.tk-tray { width: 24px; height: 24px; margin-right: 13px; }
.tk-clock { display: flex; flex-direction: column; align-items: flex-end; font-size: 17.500px; line-height: 24px; color: #1f1f1f; width: 108px; margin-left: -4px; }
.tk-bell { width: 20px; height: 26px; margin: 0 32px 0 13px; }
```
